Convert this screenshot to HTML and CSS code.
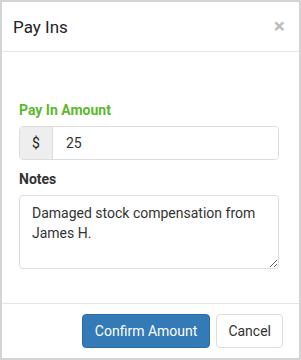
FILE: index.html
```html
<!DOCTYPE html>
<html lang="en">
<head>
    <meta charset="UTF-8">
    <meta name="viewport" content="width=device-width, initial-scale=1.0">
    <title>Pay Ins</title>
    <link rel="stylesheet" href="styles.css">
</head>
<body>
    <div class="modal">
        <div class="modal-header">
            <h4 class="modal-title">Pay Ins</h4>
            <button class="close" type="button">&times;</button>
        </div>

        <div class="modal-body">
            <label class="field-label green" for="amount">Pay In Amount</label>
            <div class="input-group">
                <span class="addon">$</span>
                <input id="amount" class="field" type="text" value="25">
            </div>

            <label class="field-label" for="notes">Notes</label>
            <textarea id="notes" class="field notes">Damaged stock compensation from James H.</textarea>
        </div>

        <div class="modal-footer">
            <button class="btn btn-primary" type="button">Confirm Amount</button>
            <button class="btn btn-default" type="button">Cancel</button>
        </div>
    </div>
</body>
</html>
```

FILE: styles.css
```css
* {
    box-sizing: border-box;
    margin: 0;
    padding: 0;
    font-family: Roboto, "Liberation Sans", Arial, sans-serif;
}

html, body {
    width: 100%;
    height: 100%;
    background: #fff;
    color: #333;
    overflow: hidden;
}

.modal {
    width: 301px;
    height: 360px;
    border: 2px solid #d4d4d4;
    background: #fff;
    display: flex;
    flex-direction: column;
}

.modal-header {
    height: 50px;
    display: flex;
    align-items: center;
    justify-content: space-between;
    padding: 0 14px 0 11px;
    border-bottom: 1px solid #e5e5e5;
}

.modal-title {
    font-size: 17px;
    font-weight: 400;
    color: #222;
}

.close {
    border: none;
    background: none;
    color: #bdbdbd;
    font-size: 21px;
    font-weight: bold;
    line-height: 1;
    cursor: pointer;
}

.modal-body {
    flex: 1;
    padding: 50px 20px 0 17px;
    display: flex;
    flex-direction: column;
}

.field-label {
    font-size: 14px;
    font-weight: bold;
    color: #333;
    margin-bottom: 8px;
}

.green {
    color: #5cb82d;
}

.input-group {
    display: flex;
    height: 34px;
    border: 1px solid #ddd;
    border-radius: 4px;
    overflow: hidden;
    margin-bottom: 11px;
}

.addon {
    width: 33px;
    background: #eee;
    border-right: 1px solid #ddd;
    display: flex;
    align-items: center;
    justify-content: center;
    font-size: 14px;
    color: #222;
}

.field {
    flex: 1;
    border: none;
    padding: 0 13px;
    font-size: 14px;
    color: #333;
    outline: none;
}

.notes {
    flex: none;
    height: 74px;
    border: 1px solid #ddd;
    border-radius: 4px;
    padding: 7px 12px;
    line-height: 20px;
    resize: vertical;
}

.modal-footer {
    height: 55px;
    border-top: 1px solid #e5e5e5;
    display: flex;
    justify-content: flex-end;
    align-items: center;
    gap: 6px;
    padding: 0 16px 0 0;
}

.btn {
    height: 34px;
    padding: 0 12px;
    font-size: 14px;
    border-radius: 4px;
    cursor: pointer;
}

.btn-primary {
    background: #337ab7;
    border: 1px solid #2e6da4;
    color: #fff;
}

.btn-default {
    padding: 0 11px;
    background: #fff;
    border: 1px solid #ddd;
    color: #333;
}
```
